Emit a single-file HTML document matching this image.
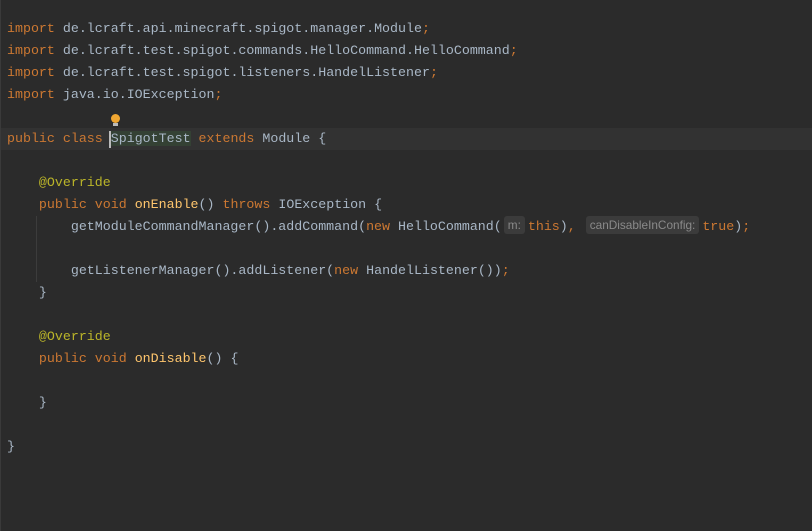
<!DOCTYPE html>
<html><head><style>
html,body{margin:0;padding:0;background:#2b2b2b;width:812px;height:531px;overflow:hidden}
.l{position:absolute;left:7px;height:22px;line-height:22px;font-family:"Liberation Mono",monospace;font-size:13.3px;color:#a9b7c6;white-space:pre}
.k{color:#cc7832}.a{color:#bbb529}.m{color:#ffc66d}
.h{display:inline-block;background:#3b3b3b;color:#8a8a8a;font-family:"Liberation Sans",sans-serif;font-size:11.8px;line-height:18px;padding:0 4px;border-radius:3px;margin:0 3px 0 2px;vertical-align:1px}
</style></head><body>
<div style="position:absolute;left:0;top:128px;width:812px;height:22px;background:#323232"></div>
<div style="position:absolute;left:0;top:0;width:1px;height:531px;background:#3a3a3a"></div>
<div style="position:absolute;left:36px;top:216px;width:1px;height:66px;background:#3c3c3c"></div>
<div class="l" style="top:18px"><span class="k">import</span> de.lcraft.api.minecraft.spigot.manager.Module<span class="k">;</span></div>
<div class="l" style="top:40px"><span class="k">import</span> de.lcraft.test.spigot.commands.HelloCommand.HelloCommand<span class="k">;</span></div>
<div class="l" style="top:62px"><span class="k">import</span> de.lcraft.test.spigot.listeners.HandelListener<span class="k">;</span></div>
<div class="l" style="top:84px"><span class="k">import</span> java.io.IOException<span class="k">;</span></div>
<div style="position:absolute;left:111px;top:114px;width:9px;height:9px;border-radius:50%;background:#f0a732"></div>
<div style="position:absolute;left:113px;top:123px;width:5px;height:3px;background:#bbb"></div>
<div class="l" style="top:128px"><span class="k">public class</span> <span style="background:#344134">SpigotTest</span> <span class="k">extends</span> Module {</div>
<div style="position:absolute;left:109px;top:131px;width:2px;height:17px;background:#bbb"></div>
<div class="l a" style="top:172px">    @Override</div>
<div class="l" style="top:194px">    <span class="k">public void</span> <span class="m">onEnable</span>() <span class="k">throws</span> IOException {</div>
<div class="l" style="top:216px">        getModuleCommandManager().addCommand(<span class="k">new</span> HelloCommand(<span class="h">m:</span><span class="k">this</span>)<span class="k">,</span> <span class="h">canDisableInConfig:</span><span class="k">true</span>)<span class="k">;</span></div>
<div class="l" style="top:260px">        getListenerManager().addListener(<span class="k">new</span> HandelListener())<span class="k">;</span></div>
<div class="l" style="top:282px">    }</div>
<div class="l a" style="top:326px">    @Override</div>
<div class="l" style="top:348px">    <span class="k">public void</span> <span class="m">onDisable</span>() {</div>
<div class="l" style="top:392px">    }</div>
<div class="l" style="top:436px">}</div>
</body></html>
